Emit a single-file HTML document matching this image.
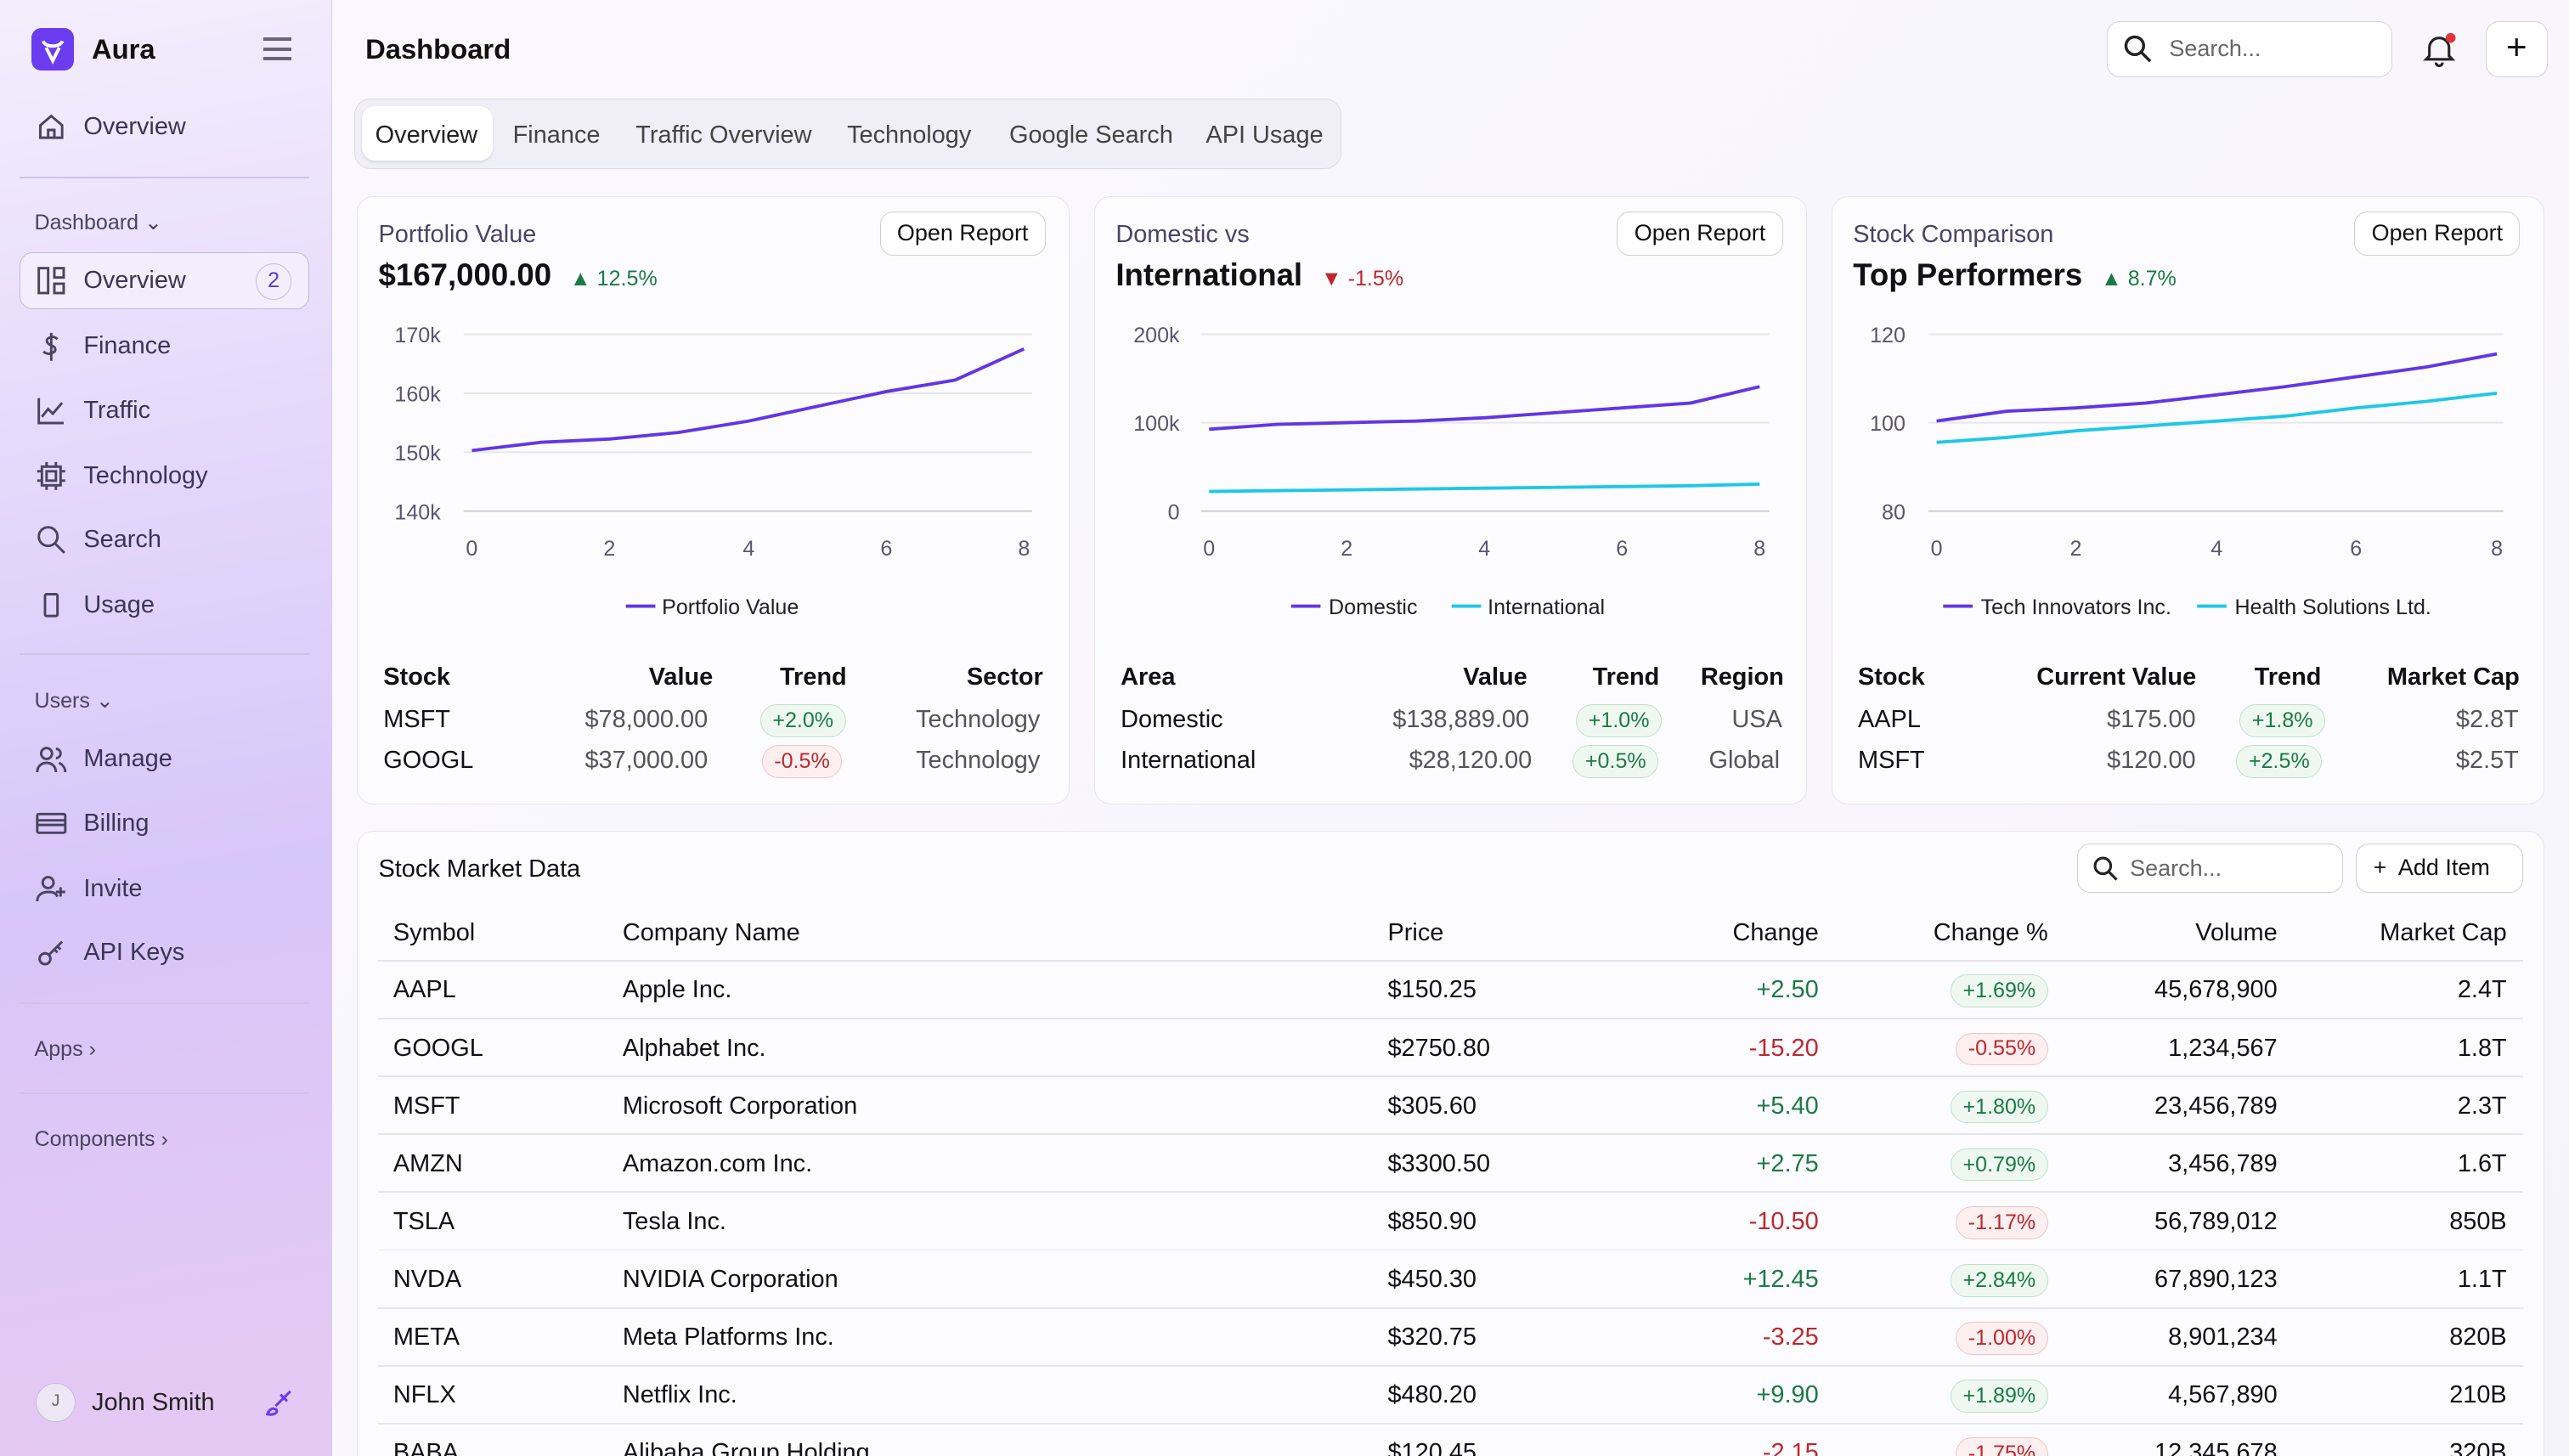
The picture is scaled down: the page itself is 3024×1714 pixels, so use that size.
<!DOCTYPE html>
<html><head><meta charset="utf-8"><style>
*{box-sizing:border-box;margin:0;padding:0}
html,body{width:3024px;height:1714px;overflow:hidden}
body{font-family:"Liberation Sans",sans-serif;color:#111;background:#fff}
#r{zoom:1.92857;width:1568px;height:889px;position:relative;background:linear-gradient(135deg,#fbf9ff,#f6f4fb)}
.a{position:absolute}
#sb{left:0;top:0;width:203px;height:889px;background:linear-gradient(170deg,#f4eefc 0%,#e3d6fb 35%,#d7c6f8 60%,#e6c9f3 100%);border-right:1px solid #d9cdee}
.ni{position:absolute;left:22px;font-size:15px;color:#3b3556;display:flex;align-items:center;gap:10px}
.ni svg{width:19px;height:19px;stroke:#4a4460;fill:none;stroke-width:1.6}
.sec{position:absolute;left:21px;font-size:13px;color:#4a4460}
.hr{position:absolute;left:12px;width:177px;height:1px;background:#cfc3e6}
.card{position:absolute;background:#fcfcff;border:1px solid #e6e4ee;border-radius:10px}
.btn{position:absolute;border:1px solid #cfcfd6;border-radius:8px;background:#fff;font-size:14px;padding:5px 10px;color:#111}
.t{position:absolute;white-space:nowrap}
.pill{display:inline-block;border-radius:11px;padding:2px 7px;font-size:13px}
.g{color:#1a7a45;background:#eef8f1;border:1px solid #bfe0cb}
.rd{color:#c0262d;background:#fcefef;border:1px solid #efc4c6}
.ax{font-size:13px;fill:#5a5470;font-family:"Liberation Sans",sans-serif}
</style></head><body><div id="r">
<div id="sb" class="a">
 <div class="a" style="left:19px;top:17px;width:26px;height:26px;border-radius:6px;background:#6b3cf0"><svg width="26" height="26" viewBox="0 0 26 26"><path d="M7 8c1 2 3 3 6 3s5-1 6-3M9 12l4 8 4-8" stroke="#fff" stroke-width="2" fill="none"/></svg></div>
 <div class="t" style="left:56px;top:20px;font-size:17px;font-weight:bold">Aura</div>
 <div class="a" style="left:161px;top:23px;width:17px"><div style="height:2px;background:#6a6478;margin-bottom:4px"></div><div style="height:2px;background:#6a6478;margin-bottom:4px"></div><div style="height:2px;background:#6a6478"></div></div>
 <div class="ni" style="top:68px"><svg viewBox="0 0 20 20"><path d="M3 9l7-6 7 6v8H3zM8 17v-5h4v5"/></svg>Overview</div>
 <div class="hr" style="top:108px"></div>
 <div class="sec" style="top:128px">Dashboard ⌄</div>
 <div class="a" style="left:12px;top:154px;width:177px;height:35px;border:1px solid #c4b8dd;border-radius:8px;background:#f3eefb"></div>
 <div class="ni" style="top:162px"><svg viewBox="0 0 20 20"><rect x="2" y="2" width="6" height="16"/><rect x="12" y="2" width="6" height="6"/><rect x="12" y="12" width="6" height="6"/></svg>Overview</div>
 <div class="a" style="left:156px;top:161px;width:22px;height:22px;border:1px solid #c7bde8;border-radius:11px;text-align:center;font-size:13px;line-height:20px;color:#5b3ad6">2</div>
 <div class="ni" style="top:202px"><svg viewBox="0 0 20 20"><path d="M14 5c-1-1-3-2-5-1-3 1-2 4 1 5s4 4 0 5c-2 1-4 0-5-1M10 1v18"/></svg>Finance</div>
 <div class="ni" style="top:241px"><svg viewBox="0 0 20 20"><path d="M2 2v16h16M4 14l4-5 3 3 6-7"/></svg>Traffic</div>
 <div class="ni" style="top:281px"><svg viewBox="0 0 20 20"><rect x="4" y="4" width="12" height="12"/><rect x="7" y="7" width="6" height="6"/><path d="M7 1v3M13 1v3M7 16v3M13 16v3M1 7h3M1 13h3M16 7h3M16 13h3"/></svg>Technology</div>
 <div class="ni" style="top:320px"><svg viewBox="0 0 20 20"><circle cx="8" cy="8" r="6"/><path d="M12.5 12.5l6 6"/></svg>Search</div>
 <div class="ni" style="top:360px"><svg viewBox="0 0 20 20"><rect x="6" y="3" width="8" height="14" rx="1"/></svg>Usage</div>
 <div class="hr" style="top:399px"></div>
 <div class="sec" style="top:420px">Users ⌄</div>
 <div class="ni" style="top:454px"><svg viewBox="0 0 20 20"><circle cx="7" cy="6" r="3.5"/><path d="M1 18c0-4 3-6 6-6s6 2 6 6M13 3a3 3 0 010 6M15 12c2 1 4 3 4 6"/></svg>Manage</div>
 <div class="ni" style="top:493px"><svg viewBox="0 0 20 20"><rect x="1" y="4" width="18" height="12" rx="1"/><path d="M1 8h18M1 11h18"/></svg>Billing</div>
 <div class="ni" style="top:533px"><svg viewBox="0 0 20 20"><circle cx="8" cy="6" r="3.5"/><path d="M1 18c0-4 3-6 7-6s5 1 6 3M16 9v6M13 12h6"/></svg>Invite</div>
 <div class="ni" style="top:572px"><svg viewBox="0 0 20 20"><circle cx="6" cy="14" r="3.5"/><path d="M8.5 11.5L17 3M14 6l2 2M12 8l2 2"/></svg>API Keys</div>
 <div class="hr" style="top:612px"></div>
 <div class="sec" style="top:633px">Apps ›</div>
 <div class="hr" style="top:667px"></div>
 <div class="sec" style="top:688px">Components ›</div>
 <div class="a" style="left:22px;top:844px;width:24px;height:24px;border-radius:12px;background:#ece6f5;border:1px solid #c8bde0;font-size:10px;text-align:center;line-height:22px;color:#666">J</div>
 <div class="t" style="left:56px;top:848px;font-size:15px;color:#222">John Smith</div>
 <svg class="a" style="left:160px;top:846px" width="20" height="20" viewBox="0 0 20 20" fill="none" stroke="#6b3cf0" stroke-width="1.6"><path d="M3 17c1-3 3-4 5-3s0 4-5 3zM8 12l9-9M11 5l4 4"/></svg>
</div>

<div class="t" style="left:223px;top:20px;font-size:17px;font-weight:bold">Dashboard</div>
<div class="a" style="left:1286px;top:13px;width:174px;height:34px;border:1px solid #d4d2dc;border-radius:8px;background:#fff"></div>
<svg class="a" style="left:1296px;top:21px" width="18" height="18" viewBox="0 0 20 20" fill="none" stroke="#222" stroke-width="2"><circle cx="8" cy="8" r="6"/><path d="M12.5 12.5l6 6"/></svg>
<div class="t" style="left:1324px;top:22px;font-size:14px;color:#666">Search...</div>
<svg class="a" style="left:1478px;top:19px" width="22" height="22" viewBox="0 0 22 22" fill="none" stroke="#222" stroke-width="1.6"><path d="M5 15V10a6 6 0 0112 0v5l2 2H3zM9 19a2 2 0 004 0"/><circle cx="18" cy="4" r="3" fill="#e0333a" stroke="none"/></svg>
<div class="a" style="left:1517px;top:13px;width:38px;height:34px;border:1px solid #d4d2dc;border-radius:8px;background:#fff;text-align:center;font-size:22px;line-height:31px">+</div>

<div class="a" style="left:216px;top:60px;width:603px;height:43px;border:1px solid #dcd9e6;border-radius:10px;background:#f0eff7"></div>
<div class="a" style="left:221px;top:65px;width:80px;height:33px;border-radius:8px;background:#fff;box-shadow:0 1px 2px rgba(0,0,0,.1)"></div>
<div class="t" style="left:229px;top:74px;font-size:15px;color:#222">Overview</div>
<div class="t" style="left:313px;top:74px;font-size:15px;color:#444">Finance</div>
<div class="t" style="left:388px;top:74px;font-size:15px;color:#444">Traffic Overview</div>
<div class="t" style="left:517px;top:74px;font-size:15px;color:#444">Technology</div>
<div class="t" style="left:616px;top:74px;font-size:15px;color:#444">Google Search</div>
<div class="t" style="left:736px;top:74px;font-size:15px;color:#444">API Usage</div>

<div class="card" style="left:218px;top:120px;width:435px;height:371px"></div>
<div class="card" style="left:668px;top:120px;width:435px;height:371px"></div>
<div class="card" style="left:1118px;top:120px;width:435px;height:371px"></div>
<div class="btn" style="left:537px;top:129px">Open Report</div>
<div class="btn" style="left:987px;top:129px">Open Report</div>
<div class="btn" style="left:1437px;top:129px">Open Report</div>
<div class="t" style="left:231px;top:135px;font-size:15px;color:#4a4468">Portfolio Value</div>
<div class="t" style="left:231px;top:157px;font-size:19px;font-weight:bold">$167,000.00 <span style="font-size:13px;font-weight:normal;color:#1a7a45;margin-left:6px">▲ 12.5%</span></div>
<div class="t" style="left:681px;top:135px;font-size:15px;color:#4a4468">Domestic vs</div>
<div class="t" style="left:681px;top:157px;font-size:19px;font-weight:bold">International <span style="font-size:13px;font-weight:normal;color:#c0262d;margin-left:6px">▼ -1.5%</span></div>
<div class="t" style="left:1131px;top:135px;font-size:15px;color:#4a4468">Stock Comparison</div>
<div class="t" style="left:1131px;top:157px;font-size:19px;font-weight:bold">Top Performers <span style="font-size:13px;font-weight:normal;color:#1a7a45;margin-left:6px">▲ 8.7%</span></div>

<svg class="a" style="left:0;top:0" width="1568" height="400">
 <g stroke="#e6e6ea"><line x1="283" y1="204" x2="630" y2="204"/><line x1="283" y1="240" x2="630" y2="240"/><line x1="283" y1="276" x2="630" y2="276"/>
 <line x1="733" y1="204" x2="1080" y2="204"/><line x1="733" y1="258" x2="1080" y2="258"/>
 <line x1="1177" y1="204" x2="1528" y2="204"/><line x1="1177" y1="258" x2="1528" y2="258"/></g>
 <g stroke="#ccc"><line x1="283" y1="312" x2="630" y2="312"/><line x1="733" y1="312" x2="1080" y2="312"/><line x1="1177" y1="312" x2="1528" y2="312"/></g>
 <g class="ax" text-anchor="end"><text x="269" y="209">170k</text><text x="269" y="245">160k</text><text x="269" y="281">150k</text><text x="269" y="317">140k</text>
 <text x="720" y="209">200k</text><text x="720" y="263">100k</text><text x="720" y="317">0</text>
 <text x="1163" y="209">120</text><text x="1163" y="263">100</text><text x="1163" y="317">80</text></g>
 <g class="ax" text-anchor="middle"><text x="288" y="339">0</text><text x="372" y="339">2</text><text x="457" y="339">4</text><text x="541" y="339">6</text><text x="625" y="339">8</text>
 <text x="738" y="339">0</text><text x="822" y="339">2</text><text x="906" y="339">4</text><text x="990" y="339">6</text><text x="1074" y="339">8</text>
 <text x="1182" y="339">0</text><text x="1267" y="339">2</text><text x="1353" y="339">4</text><text x="1438" y="339">6</text><text x="1524" y="339">8</text></g>
 <g fill="none" stroke-width="2">
 <polyline stroke="#6236e6" points="288,275 330,270 372,268 414,264 457,257 499,248 541,239 583,232 625,213"/>
 <polyline stroke="#6236e6" points="738,262 780,259 822,258 864,257 906,255 948,252 990,249 1032,246 1074,236"/>
 <polyline stroke="#1ec8e6" points="738,300 780,299.5 822,299 864,298.5 906,298 948,297.5 990,297 1032,296.5 1074,295.5"/>
 <polyline stroke="#6236e6" points="1182,257 1225,251 1267,249 1310,246 1353,241 1395,236 1438,230 1481,224 1524,216"/>
 <polyline stroke="#1ec8e6" points="1182,270 1225,267 1267,263 1310,260 1353,257 1395,254 1438,249 1481,245 1524,240"/>
 <line x1="382" y1="370" x2="400" y2="370" stroke="#6236e6"/><line x1="788" y1="370" x2="806" y2="370" stroke="#6236e6"/><line x1="886" y1="370" x2="904" y2="370" stroke="#1ec8e6"/>
 <line x1="1186" y1="370" x2="1204" y2="370" stroke="#6236e6"/><line x1="1341" y1="370" x2="1359" y2="370" stroke="#1ec8e6"/></g>
 <g class="ax" style="fill:#222"><text x="404" y="375">Portfolio Value</text><text x="811" y="375">Domestic</text><text x="908" y="375">International</text><text x="1209" y="375">Tech Innovators Inc.</text><text x="1364" y="375">Health Solutions Ltd.</text></g>
</svg>

<div style="font-size:15px">
<div class="t" style="left:234px;top:405px;font-weight:bold">Stock</div><div class="t" style="left:396px;top:405px;font-weight:bold">Value</div><div class="t" style="left:476px;top:405px;font-weight:bold">Trend</div><div class="t" style="left:590px;top:405px;font-weight:bold">Sector</div>
<div class="t" style="left:234px;top:431px">MSFT</div><div class="t" style="left:357px;top:431px;color:#555">$78,000.00</div><div class="t" style="left:464px;top:430px"><span class="pill g">+2.0%</span></div><div class="t" style="left:559px;top:431px;color:#555">Technology</div>
<div class="t" style="left:234px;top:456px">GOOGL</div><div class="t" style="left:357px;top:456px;color:#555">$37,000.00</div><div class="t" style="left:465px;top:455px"><span class="pill rd">-0.5%</span></div><div class="t" style="left:559px;top:456px;color:#555">Technology</div>

<div class="t" style="left:684px;top:405px;font-weight:bold">Area</div><div class="t" style="left:893px;top:405px;font-weight:bold">Value</div><div class="t" style="left:972px;top:405px;font-weight:bold">Trend</div><div class="t" style="left:1038px;top:405px;font-weight:bold">Region</div>
<div class="t" style="left:684px;top:431px">Domestic</div><div class="t" style="left:850px;top:431px;color:#555">$138,889.00</div><div class="t" style="left:962px;top:430px"><span class="pill g">+1.0%</span></div><div class="t" style="left:1057px;top:431px;color:#555">USA</div>
<div class="t" style="left:684px;top:456px">International</div><div class="t" style="left:860px;top:456px;color:#555">$28,120.00</div><div class="t" style="left:960px;top:455px"><span class="pill g">+0.5%</span></div><div class="t" style="left:1043px;top:456px;color:#555">Global</div>

<div class="t" style="left:1134px;top:405px;font-weight:bold">Stock</div><div class="t" style="left:1243px;top:405px;font-weight:bold">Current Value</div><div class="t" style="left:1376px;top:405px;font-weight:bold">Trend</div><div class="t" style="left:1457px;top:405px;font-weight:bold">Market Cap</div>
<div class="t" style="left:1134px;top:431px">AAPL</div><div class="t" style="left:1286px;top:431px;color:#555">$175.00</div><div class="t" style="left:1367px;top:430px"><span class="pill g">+1.8%</span></div><div class="t" style="left:1499px;top:431px;color:#555">$2.8T</div>
<div class="t" style="left:1134px;top:456px">MSFT</div><div class="t" style="left:1286px;top:456px;color:#555">$120.00</div><div class="t" style="left:1365px;top:455px"><span class="pill g">+2.5%</span></div><div class="t" style="left:1499px;top:456px;color:#555">$2.5T</div>
</div>

<div class="card" style="left:218px;top:507px;width:1335px;height:400px"></div>
<div class="t" style="left:231px;top:522px;font-size:15px">Stock Market Data</div>
<div class="a" style="left:1268px;top:515px;width:162px;height:30px;border:1px solid #cfcfd6;border-radius:8px;background:#fff"></div>
<svg class="a" style="left:1277px;top:522px" width="16" height="16" viewBox="0 0 20 20" fill="none" stroke="#222" stroke-width="2"><circle cx="8" cy="8" r="6"/><path d="M12.5 12.5l6 6"/></svg>
<div class="t" style="left:1300px;top:522px;font-size:14px;color:#666">Search...</div>
<div class="btn" style="left:1438px;top:515px;height:30px;width:102px;padding:6px 10px">+&nbsp; Add Item</div>
<div id="tb" style="font-size:15px"></div>
</div>
<script>
var rows=[["AAPL","Apple Inc.","$150.25","+2.50","+1.69%","45,678,900","2.4T"],["GOOGL","Alphabet Inc.","$2750.80","-15.20","-0.55%","1,234,567","1.8T"],["MSFT","Microsoft Corporation","$305.60","+5.40","+1.80%","23,456,789","2.3T"],["AMZN","Amazon.com Inc.","$3300.50","+2.75","+0.79%","3,456,789","1.6T"],["TSLA","Tesla Inc.","$850.90","-10.50","-1.17%","56,789,012","850B"],["NVDA","NVIDIA Corporation","$450.30","+12.45","+2.84%","67,890,123","1.1T"],["META","Meta Platforms Inc.","$320.75","-3.25","-1.00%","8,901,234","820B"],["NFLX","Netflix Inc.","$480.20","+9.90","+1.89%","4,567,890","210B"],["BABA","Alibaba Group Holding","$120.45","-2.15","-1.75%","12,345,678","320B"]];
var h='';
function L(x,y,s,st){return '<div class="t" style="left:'+x+'px;top:'+y+'px;'+(st||'')+'">'+s+'</div>';}
function R(x,y,s,st){return '<div class="t" style="right:'+(1568-x)+'px;top:'+y+'px;'+(st||'')+'">'+s+'</div>';}
h+=L(240,561,'Symbol')+L(380,561,'Company Name')+L(847,561,'Price')+R(1110,561,'Change')+R(1250,561,'Change %')+R(1390,561,'Volume')+R(1530,561,'Market Cap');
rows.forEach(function(r,i){var y=596+i*35.3,neg=r[3][0]=='-';
h+='<div class="a" style="left:231px;top:'+(y-10)+'px;width:1309px;height:1px;background:#e6e4ec"></div>';
h+=L(240,y,r[0])+L(380,y,r[1])+L(847,y,r[2])+R(1110,y,r[3],'color:'+(neg?'#c0262d':'#1a7a45'))+R(1250,y-1,'<span class="pill '+(neg?'rd':'g')+'">'+r[4]+'</span>')+R(1390,y,r[5])+R(1530,y,r[6]);});
document.getElementById('tb').innerHTML=h;
</script>
</body></html>
